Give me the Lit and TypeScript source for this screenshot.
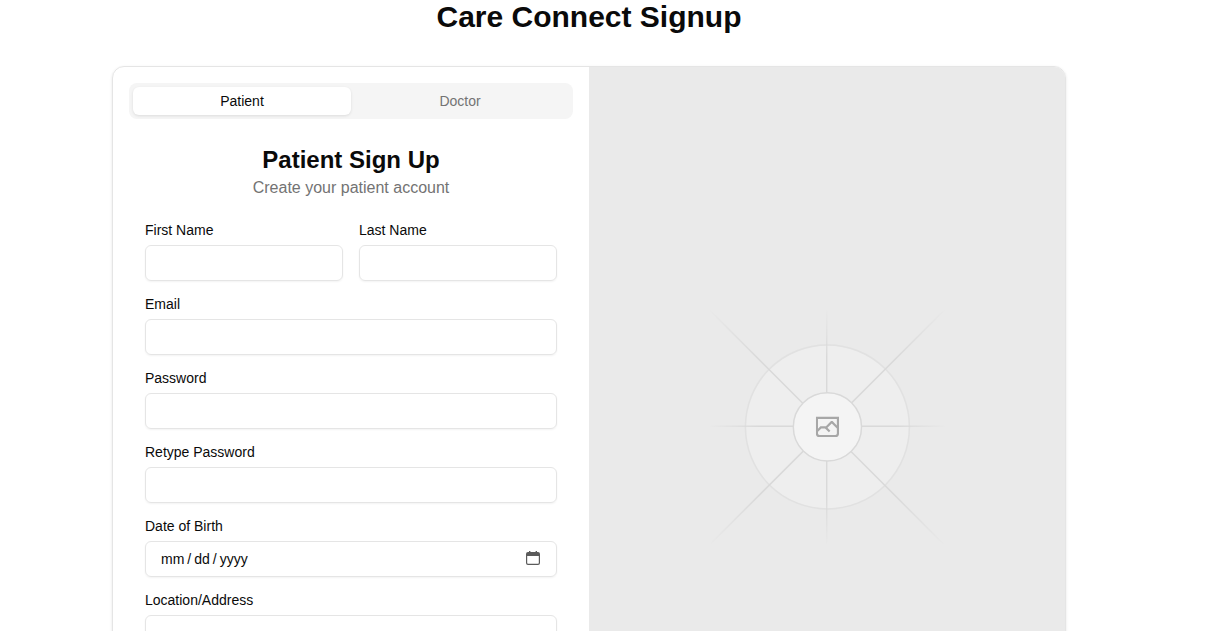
import { LitElement, html, css, svg } from "lit";
import { customElement, state } from "lit/decorators.js";
import { classMap } from "lit/directives/class-map.js";

type Role = "Patient" | "Doctor";

interface Field {
  id: string;
  label: string;
  type: string;
  half?: boolean;
}

const FIELDS: Field[] = [
  { id: "first-name", label: "First Name", type: "text", half: true },
  { id: "last-name", label: "Last Name", type: "text", half: true },
  { id: "email", label: "Email", type: "email" },
  { id: "password", label: "Password", type: "password" },
  { id: "retype-password", label: "Retype Password", type: "password" },
  { id: "birth-date", label: "Date of Birth", type: "date" },
  { id: "address", label: "Location/Address", type: "text" },
];

const ray = (id: string, x1: number, y1: number, x2: number, y2: number) => svg`
  <linearGradient id=${id} x1=${x1} y1=${y1} x2=${x2} y2=${y2} gradientUnits="userSpaceOnUse">
    <stop stop-color="#C9C9C9" stop-opacity="0"></stop>
    <stop offset=".208" stop-color="#C9C9C9"></stop>
    <stop offset=".792" stop-color="#C9C9C9"></stop>
    <stop offset="1" stop-color="#C9C9C9" stop-opacity="0"></stop>
  </linearGradient>`;

@customElement("placeholder-art")
export class PlaceholderArt extends LitElement {
  static styles = css`
    :host {
      display: block;
      background: #eaeaea;
      overflow: hidden;
    }
    .art {
      display: block;
      width: 100%;
      height: 100%;
    }
  `;

  render() {
    return html`
      <svg class="art" viewBox="0 0 1200 1200" preserveAspectRatio="xMidYMid slice" fill="none" aria-hidden="true">
        <g opacity=".5">
          <g opacity=".5">
            <circle cx="600.709" cy="599.88" r="136.62" fill="#FAFAFA"></circle>
            <circle cx="600.709" cy="599.88" r="136.62" stroke="#C9C9C9" stroke-width="2.418"></circle>
          </g>
          <path stroke="url(#a)" stroke-width="2.418" d="M404.846 795.742 796.572 404.017"></path>
          <path stroke="url(#b)" stroke-width="2.418" d="M404.846 598.671h391.726"></path>
          <path stroke="url(#c)" stroke-width="2.418" d="M599.5 795.742V404.017"></path>
          <path stroke="url(#d)" stroke-width="2.418" d="m795.717 796.597-391.441-391.44"></path>
          <circle cx="600.709" cy="599.88" r="56.825" fill="#fff"></circle>
          <g clip-path="url(#e)">
            <path
              fill="#666"
              fill-rule="evenodd"
              clip-rule="evenodd"
              d="M616.426 586.58h-31.434v16.176l3.553-3.554.531-.531h9.068l.074-.074 8.463-8.463h2.565l7.18 7.181V586.58Zm-15.715 14.654 3.698 3.699 1.283 1.282-2.565 2.565-1.282-1.283-5.2-5.199h-6.066l-5.514 5.514-.073.073v2.876a2.418 2.418 0 0 0 2.418 2.418h26.598a2.418 2.418 0 0 0 2.418-2.418v-8.317l-8.463-8.463-7.181 7.181-.071.072Zm-19.347 5.442v4.085a6.045 6.045 0 0 0 6.046 6.045h26.598a6.044 6.044 0 0 0 6.045-6.045v-7.108l1.356-1.355-1.282-1.283-.074-.073v-17.989h-38.689v23.43l-.146.146.146.147Z"
            ></path>
          </g>
          <circle cx="600.709" cy="599.88" r="56.825" stroke="#C9C9C9" stroke-width="2.418"></circle>
        </g>
        <defs>
          ${ray("a", 404.846, 795.742, 796.572, 404.017)}
          ${ray("b", 404.846, 598.671, 796.572, 598.671)}
          ${ray("c", 599.5, 795.742, 599.5, 404.017)}
          ${ray("d", 795.717, 796.597, 404.276, 405.157)}
          <clipPath id="e"><path d="M581.364 580.535h38.689v38.689h-38.689z"></path></clipPath>
        </defs>
      </svg>
    `;
  }
}

@customElement("app-root")
export class AppRoot extends LitElement {
  static styles = css`
    :host {
      display: block;
      min-height: 100vh;
      background: #fff;
      color: #0a0a0a;
      font-family: "Liberation Sans", Arial, sans-serif;
      font-size: 16px;
      line-height: 24px;
    }
    * {
      box-sizing: border-box;
    }
    .page {
      display: flex;
      flex-direction: column;
      gap: 32px;
      padding: 0 158px 32px 112px;
    }
    .title {
      margin: 0;
      font-size: 30px;
      line-height: 34px;
      text-align: center;
    }
    .card {
      display: grid;
      grid-template-columns: 1fr 1fr;
      min-height: 722px;
      border: 1px solid #e5e5e5;
      border-radius: 12px;
      box-shadow: 0 1px 3px rgb(0 0 0 / 0.1);
      overflow: hidden;
    }
    .panel {
      padding: 16px;
    }
    .tabs {
      display: grid;
      grid-template-columns: 1fr 1fr;
      height: 36px;
      padding: 4px;
      border-radius: 8px;
      background: #f5f5f5;
    }
    .tab {
      border: 0;
      border-radius: 6px;
      padding: 0 12px;
      background: transparent;
      color: #737373;
      font: inherit;
      font-size: 14px;
      line-height: 20px;
    }
    .tab.active {
      background: #fff;
      color: #0a0a0a;
      box-shadow: 0 1px 3px rgb(0 0 0 / 0.1);
    }
    .form {
      display: flex;
      flex-direction: column;
      gap: 23px;
      padding: 25px 16px 16px;
    }
    .intro {
      text-align: center;
    }
    .heading {
      margin: 0;
      font-size: 24px;
      line-height: 32px;
    }
    .lead {
      margin: 0;
      color: #737373;
    }
    .fields {
      display: grid;
      grid-template-columns: 1fr 1fr;
      gap: 16px;
    }
    .field {
      display: grid;
      grid-column: span 2;
      gap: 8px;
    }
    .field.half {
      grid-column: span 1;
    }
    .label {
      font-size: 14px;
      line-height: 14px;
    }
    .input {
      width: 100%;
      min-width: 0;
      height: 36px;
      padding: 4px 12px;
      border: 1px solid #e5e5e5;
      border-radius: 6px;
      background: transparent;
      color: inherit;
      font: inherit;
      font-size: 14px;
      box-shadow: 0 1px 2px rgb(0 0 0 / 0.05);
    }
    .input::-webkit-datetime-edit {
      padding-left: 2px;
    }
    .input::-webkit-datetime-edit-text {
      padding: 0 2px;
    }
    .input::-webkit-calendar-picker-indicator {
      width: 14px;
      height: 14px;
      margin: 0 4px 2px 0;
      padding: 0;
      background: url("data:image/svg+xml,%3Csvg xmlns='http://www.w3.org/2000/svg' viewBox='0 0 14 14'%3E%3Cpath fill='%235b5b5b' fill-rule='evenodd' d='M3 0h1.400v1h5.200V0H11v1h1a2 2 0 0 1 2 2v9a2 2 0 0 1-2 2H2a2 2 0 0 1-2-2V3a2 2 0 0 1 2-2h1ZM1.200 5v7a.8.8 0 0 0 .8.8h10a.8.8 0 0 0 .8-.8V5Z'/%3E%3C/svg%3E") center / 14px 14px no-repeat;
    }
  `;

  @state() private role_: Role = "Patient";

  private renderTab(name: Role) {
    const active = this.role_ === name;
    return html`<button
      type="button"
      role="tab"
      aria-selected=${active}
      class=${classMap({ tab: true, active })}
      @click=${() => (this.role_ = name)}
    >${name}</button>`;
  }

  private renderField(f: Field) {
    return html`<div class=${classMap({ field: true, half: !!f.half })}>
      <label class="label" for=${f.id}>${f.label}</label>
      <input class="input" id=${f.id} name=${f.id} type=${f.type} />
    </div>`;
  }

  render() {
    return html`
      <main class="page">
        <h1 class="title">Care Connect Signup</h1>
        <section class="card">
          <div class="panel">
            <div class="tabs" role="tablist">${this.renderTab("Patient")}${this.renderTab("Doctor")}</div>
            <form class="form">
              <div class="intro">
                <h2 class="heading">${this.role_} Sign Up</h2>
                <p class="lead">Create your ${this.role_.toLowerCase()} account</p>
              </div>
              <div class="fields">${FIELDS.map((f) => this.renderField(f))}</div>
            </form>
          </div>
          <placeholder-art></placeholder-art>
        </section>
      </main>
    `;
  }
}
